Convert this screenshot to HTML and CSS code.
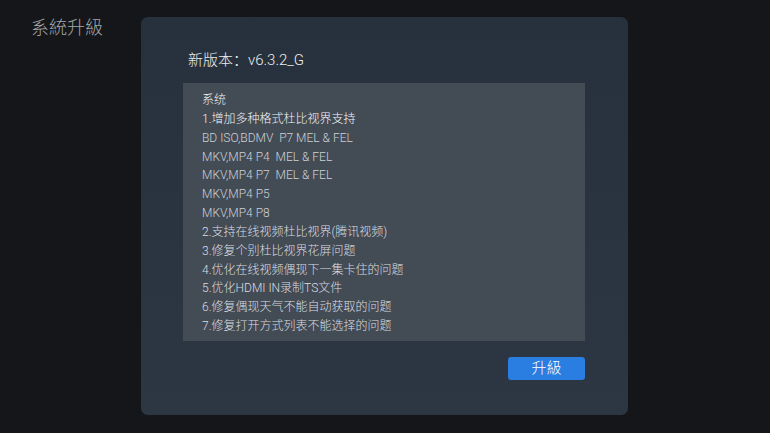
FILE: index.html
```html
<!DOCTYPE html>
<html>
<head>
<meta charset="utf-8">
<link rel="stylesheet" href="styles.css">
</head>
<body>
<div class="screen">
  <div class="side">
    <h1 class="title">系統升級</h1>
  </div>
  <div class="panel">
    <div class="version">新版本：v6.3.2_G</div>
    <div class="notes">
      <div class="line hi">系统</div>
      <div class="line hi">1.增加多种格式杜比视界支持</div>
      <div class="line dim">BD ISO,BDMV&nbsp; P7 MEL &amp; FEL</div>
      <div class="line dim">MKV,MP4 P4&nbsp; MEL &amp; FEL</div>
      <div class="line dim">MKV,MP4 P7&nbsp; MEL &amp; FEL</div>
      <div class="line dim">MKV,MP4 P5</div>
      <div class="line dim">MKV,MP4 P8</div>
      <div class="line">2.支持在线视频杜比视界(腾讯视频)</div>
      <div class="line">3.修复个别杜比视界花屏问题</div>
      <div class="line">4.优化在线视频偶现下一集卡住的问题</div>
      <div class="line">5.优化HDMI IN录制TS文件</div>
      <div class="line">6.修复偶现天气不能自动获取的问题</div>
      <div class="line">7.修复打开方式列表不能选择的问题</div>
    </div>
    <div class="actions">
      <button class="btn">升級</button>
    </div>
  </div>
</div>
</body>
</html>
```

FILE: styles.css
```css
html, body {
  margin: 0;
  padding: 0;
  background: #141619;
  width: 770px;
  height: 433px;
  overflow: hidden;
  font-family: Roboto, "Noto Sans CJK SC", sans-serif;
}
.screen {
  display: flex;
  padding-top: 17px;
}
.side {
  width: 141px;
  padding-left: 31px;
  box-sizing: border-box;
}
.title {
  margin: 0;
  font-family: Roboto, "Noto Sans CJK TC", sans-serif;
  font-weight: 300;
  font-size: 18px;
  line-height: 22px;
  color: #a3a5a8;
}
.panel {
  width: 487px;
  height: 398px;
  box-sizing: border-box;
  border-radius: 7px;
  background: linear-gradient(180deg, #27313d 0%, #2d3743 100%);
  padding: 0 43px 0 42px;
  display: flex;
  flex-direction: column;
}
.version {
  margin-top: 33px;
  height: 33px;
  padding-left: 5px;
  font-size: 15px;
  font-weight: 300;
  line-height: 20px;
  color: #eceeef;
}
.notes {
  background: #434b55;
  height: 258px;
  box-sizing: border-box;
  padding: 8px 0 0 19px;
}
.line {
  font-size: 12px;
  font-weight: 300;
  line-height: 18.85px;
  color: #dadde0;
  white-space: nowrap;
}
.line.hi { color: #f4f5f6; }
.line.dim { color: #cdd1d5; }
.actions {
  display: flex;
  justify-content: flex-end;
  margin-top: 16px;
}
.btn {
  width: 77px;
  height: 23px;
  border: none;
  border-radius: 3px;
  background: #2a7de1;
  color: #ffffff;
  font-family: Roboto, "Noto Sans CJK TC", sans-serif;
  font-weight: 300;
  font-size: 15px;
  line-height: 23px;
  padding: 0;
}
```
